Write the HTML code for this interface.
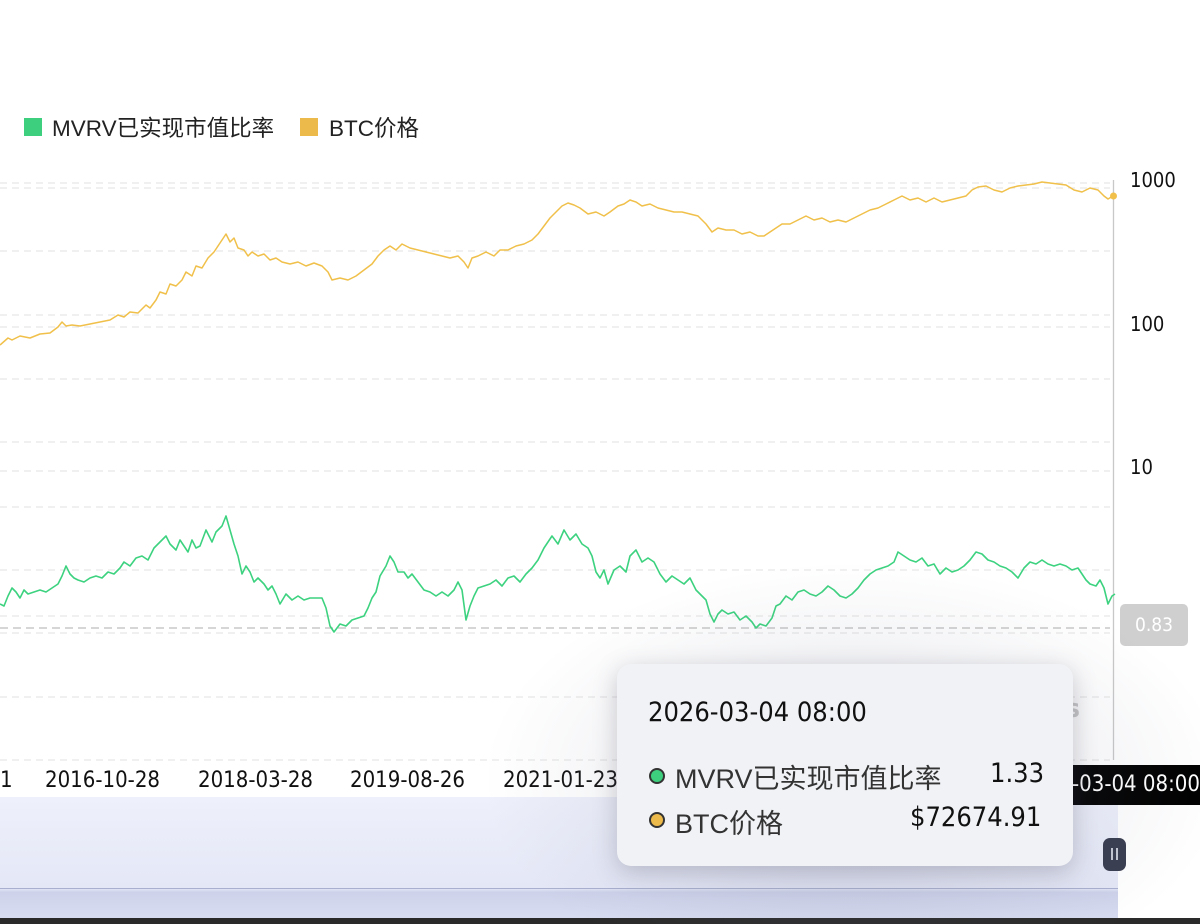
<!DOCTYPE html>
<html><head><meta charset="utf-8"><style>
body{margin:0;width:1200px;height:924px;overflow:hidden;background:#fff;font-family:"DejaVu Sans Condensed","Liberation Sans","Noto Sans CJK SC",sans-serif;position:relative}
.abs{position:absolute}
.t{font-family:"Liberation Sans","Noto Sans CJK SC",sans-serif}
</style></head><body>
<!-- legend -->
<div class="abs" style="left:24px;top:118px;width:18px;height:18px;background:#3ecf7e"></div>
<div class="abs t" style="left:52px;top:111px;font-size:22.5px;color:#222">MVRV已实现市值比率</div>
<div class="abs" style="left:300px;top:118px;width:18px;height:18px;background:#ecb94b"></div>
<div class="abs t" style="left:329px;top:111px;font-size:22.5px;color:#222">BTC价格</div>

<!-- slider area -->
<div class="abs" style="left:0;top:797px;width:1118px;height:122px;background:linear-gradient(180deg,#eef0fb,#e4e7f6 75%,#cdd2ea 78%,#d9ddf2)"></div>
<div class="abs" style="left:0;top:888px;width:1118px;height:1px;background:#a9b0cf"></div>
<div class="abs" style="left:0;top:918px;width:1200px;height:6px;background:#2a2a2a"></div>

<svg class="abs" style="left:0;top:0" width="1200" height="924">
<g stroke="#e2e2e2" stroke-width="1" stroke-dasharray="7,5">
<line x1="0" y1="183" x2="1110" y2="183"/><line x1="0" y1="188" x2="1110" y2="188"/>
<line x1="0" y1="251" x2="1110" y2="251"/><line x1="0" y1="315" x2="1110" y2="315"/>
<line x1="0" y1="327" x2="1110" y2="327"/><line x1="0" y1="379" x2="1110" y2="379"/>
<line x1="0" y1="442" x2="1110" y2="442"/><line x1="0" y1="471" x2="1110" y2="471"/>
<line x1="0" y1="507" x2="1110" y2="507"/><line x1="0" y1="570" x2="1110" y2="570"/>
<line x1="0" y1="616" x2="1110" y2="616"/><line x1="0" y1="633" x2="1110" y2="633"/>
<line x1="0" y1="697" x2="1110" y2="697"/><line x1="0" y1="760" x2="1110" y2="760"/>
</g>
<line x1="0" y1="628" x2="1110" y2="628" stroke="#bdbdbd" stroke-width="1.3" stroke-dasharray="8,5"/>
<line x1="1113.5" y1="180" x2="1113.5" y2="760" stroke="#c8c8c8" stroke-width="1.3"/>
<polyline fill="none" stroke="#f0c04a" stroke-width="1.5" stroke-linejoin="round" points="0,345 8,338 12,340 20,336 30,338 40,334 50,333 58,327 62,322 66,326 72,325 80,326 90,324 100,322 110,320 118,315 124,317 130,312 138,313 146,305 150,308 156,300 160,292 166,294 170,284 176,286 182,280 186,272 192,276 196,266 202,268 208,258 214,252 218,246 222,240 226,234 230,242 234,238 238,248 244,250 248,256 252,252 258,256 264,254 270,260 276,258 282,262 290,264 298,262 306,266 314,263 322,266 328,272 332,280 340,278 348,280 356,276 364,270 372,264 378,256 384,250 390,246 396,250 402,244 410,248 418,250 426,252 434,254 442,256 450,258 458,256 464,262 468,268 472,258 478,256 486,252 494,256 500,250 508,250 516,246 524,244 532,240 538,234 544,226 550,218 556,212 562,206 568,203 574,205 580,208 588,214 596,212 604,216 610,212 618,206 624,204 630,200 636,202 642,206 650,204 658,208 666,210 674,212 682,212 690,214 698,216 706,224 712,232 718,228 726,230 734,230 742,234 750,232 758,236 764,236 770,232 776,228 782,224 790,224 798,220 806,216 814,220 822,218 830,222 838,220 846,222 854,218 862,214 870,210 878,208 886,204 894,200 902,196 910,200 918,198 926,202 934,198 942,202 950,200 958,198 966,196 972,190 978,187 986,186 994,190 1002,192 1010,188 1018,186 1026,185 1034,184 1042,182 1050,183 1058,184 1066,185 1074,190 1082,192 1090,188 1098,190 1104,196 1108,199 1113,196"/>
<circle cx="1113.5" cy="196" r="3.5" fill="#f0c04a"/>
<polyline fill="none" stroke="#3cd27f" stroke-width="1.6" stroke-linejoin="round" points="0,604 4,606 8,596 12,588 16,592 20,598 24,590 28,594 34,592 40,590 46,592 52,588 58,584 62,576 66,566 70,574 74,578 78,580 84,582 90,578 96,576 102,578 108,572 114,574 120,568 124,562 130,566 136,558 142,556 148,560 154,548 160,542 166,536 170,544 176,550 180,540 184,546 188,552 192,540 196,548 200,546 206,530 212,542 216,532 222,526 226,516 230,530 234,544 238,556 242,574 246,566 250,572 254,582 258,578 264,584 268,590 272,586 276,594 280,604 286,594 292,600 298,596 304,600 310,598 316,598 322,598 326,608 330,626 334,632 340,624 346,626 352,620 358,618 364,616 368,608 372,598 376,592 380,576 386,566 390,556 394,562 398,572 404,572 408,578 412,574 418,582 424,590 430,592 436,596 442,592 448,596 454,590 458,582 462,590 466,620 470,606 474,596 478,588 484,586 490,584 496,580 502,586 508,578 514,576 520,582 526,574 532,568 538,560 544,548 548,542 552,536 558,544 564,530 570,540 576,534 582,544 588,548 592,556 596,572 600,578 604,570 608,584 614,570 620,566 626,572 630,556 636,550 642,562 648,558 654,562 660,574 666,582 672,576 678,580 684,584 690,578 696,590 700,594 706,600 710,614 714,622 718,614 722,610 728,614 734,612 740,620 746,616 752,622 756,628 760,624 766,626 772,618 776,606 780,604 786,596 792,600 798,592 804,590 810,594 816,596 822,592 828,586 834,590 840,596 846,598 852,594 858,588 864,580 870,574 876,570 882,568 888,566 894,562 898,552 904,556 910,560 916,562 922,558 928,566 934,564 940,574 946,568 952,572 958,570 964,566 970,560 976,552 982,554 988,560 994,562 1000,566 1006,568 1012,572 1018,578 1024,568 1030,562 1036,564 1042,560 1048,564 1054,566 1060,564 1066,566 1072,570 1078,568 1082,574 1086,580 1090,584 1096,586 1100,580 1104,588 1108,604 1112,596 1115,594"/>
</svg>

<!-- right labels -->
<div class="abs" style="left:1130px;top:168px;font-size:20px;color:#111">1000</div>
<div class="abs" style="left:1130px;top:312px;font-size:20px;color:#111">100</div>
<div class="abs" style="left:1130px;top:455px;font-size:20px;color:#111">10</div>
<div class="abs" style="left:1120px;top:604px;width:68px;height:42px;background:#cfcfcf;border-radius:5px;color:#fff;font-size:19px;text-align:center;line-height:42px">0.83</div>

<!-- x labels -->
<div class="abs" style="left:0;top:768px;font-size:22px;color:#111;white-space:nowrap">1</div>
<div class="abs" style="left:45px;top:768px;font-size:22px;color:#111">2016-10-28</div>
<div class="abs" style="left:198px;top:768px;font-size:22px;color:#111">2018-03-28</div>
<div class="abs" style="left:350px;top:768px;font-size:22px;color:#111">2019-08-26</div>
<div class="abs" style="left:503px;top:768px;font-size:22px;color:#111">2021-01-23</div>
<div class="abs" style="left:1072px;top:765px;width:128px;height:40px;background:#000;color:#fff;font-size:22px;line-height:40px;white-space:nowrap;overflow:hidden">-03-04 08:00</div>
<div class="abs" style="left:1066px;top:694px;font-size:26px;font-weight:bold;color:#c9c9c9">s</div>

<!-- shadow glow -->
<div class="abs" style="left:480px;top:560px;width:720px;height:364px;background:radial-gradient(ellipse at 52% 60%,rgba(120,125,150,0.25),rgba(120,125,150,0.08) 45%,rgba(120,125,150,0) 70%)"></div>

<!-- pause handle -->
<div class="abs" style="left:1103px;top:838px;width:23px;height:33px;background:#3b3f52;border-radius:7px"></div>
<div class="abs" style="left:1111px;top:848px;width:2px;height:12px;background:#c0c3d0"></div>
<div class="abs" style="left:1116px;top:848px;width:2px;height:12px;background:#c0c3d0"></div>

<!-- tooltip -->
<div class="abs" style="left:617px;top:664px;width:456px;height:202px;background:#f0f2f5;border-radius:14px;box-shadow:0 6px 24px rgba(60,60,80,0.25)"></div>
<div class="abs" style="left:648px;top:697px;font-size:27px;color:#111">2026-03-04 08:00</div>
<div class="abs" style="left:649px;top:768px;width:12px;height:12px;border-radius:50%;background:#3ecf7e;border:2.5px solid #333"></div>
<div class="abs t" style="left:675px;top:757px;font-size:27px;color:#333">MVRV已实现市值比率</div>
<div class="abs" style="left:990px;top:758px;font-size:27px;color:#111">1.33</div>
<div class="abs" style="left:649px;top:812px;width:12px;height:12px;border-radius:50%;background:#ecb94b;border:2.5px solid #333"></div>
<div class="abs t" style="left:675px;top:802px;font-size:27px;color:#333">BTC价格</div>
<div class="abs" style="left:910px;top:802px;font-size:27px;color:#111">$72674.91</div>
</body></html>
